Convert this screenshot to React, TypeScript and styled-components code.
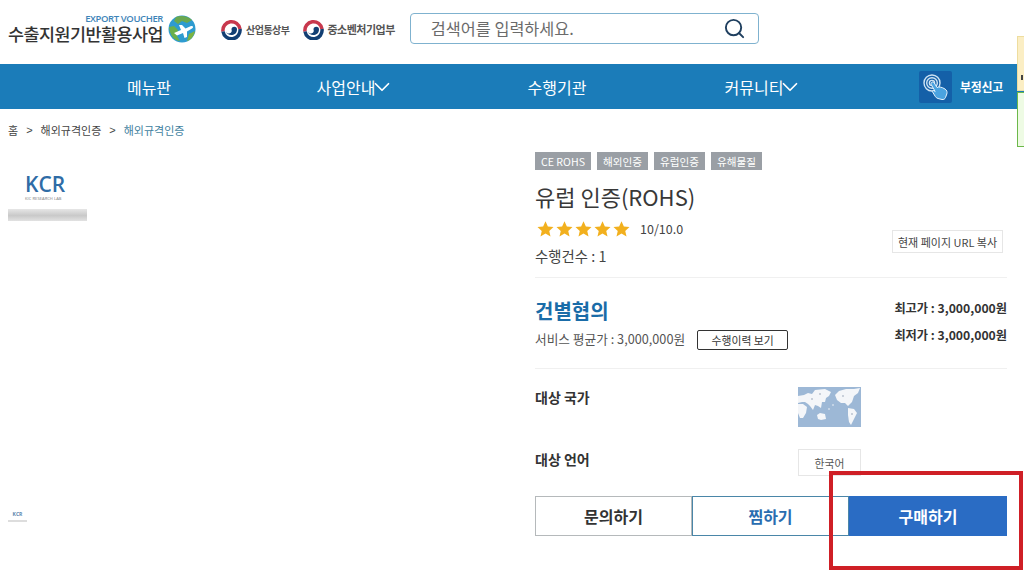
import React from "react";
import styled, { createGlobalStyle } from "styled-components";
import { ChevronDown, Search } from "lucide-react";

const GlobalStyle = createGlobalStyle`
  html, body {
    margin: 0;
    padding: 0;
    background: #fff;
  }
  body {
    font-family: "Noto Sans CJK KR", "Noto Sans", sans-serif;
    color: #333;
    overflow: hidden;
  }
  * {
    box-sizing: border-box;
  }
`;

const Taegeuk = () => (
  <svg width="21" height="21" viewBox="0 0 42 42">
    <path d="M4 25 A17 17 0 0 1 38 20" fill="none" stroke="#c8384d" strokeWidth="7" />
    <path d="M38 20 A17 17 0 0 1 4 25" fill="none" stroke="#123f73" strokeWidth="7" />
    <path d="M10 25 A11 11 0 0 1 32 21 A5.5 5.5 0 0 1 21 21 A5.5 5.5 0 0 0 10 25 Z" fill="#fff" />
    <path d="M10 25 C12 35 32 35 32 21 A5.5 5.5 0 0 0 21 21 A5.5 5.5 0 0 1 10 25 Z" fill="#123f73" />
  </svg>
);

const Globe = () => (
  <GlobeWrap width="28" height="28" viewBox="0 0 28 28">
    <circle cx="14" cy="14" r="13.5" fill="#2e9bd0" />
    <path d="M8 2 C13 0 20 1 24 5 L19 8 L14 6 L10 9 L6 6 Z" fill="#6aa84f" />
    <path d="M1 12 L6 11 L10 15 L9 21 L12 26 C7 26 2 21 1 12 Z" fill="#6ab04c" />
    <path d="M21 19 L27 16 C26 21 23 25 19 26 Z" fill="#7cb342" />
    <path d="M6 18 L13 15 L11 10 L14 10 L17.5 13.5 L23 11 C25 10.5 26 12 24 13.5 L19 16.5 L19 22 L16.5 23 L15 18 L9 20.5 Z" fill="#fff" />
  </GlobeWrap>
);

const TouchIcon = () => (
  <svg width="28" height="28" viewBox="0 0 28 28" fill="none">
    <circle cx="10" cy="10" r="8" stroke="#cfe3f3" strokeWidth="1.4" />
    <circle cx="10" cy="10" r="5.3" stroke="#cfe3f3" strokeWidth="1.4" />
    <circle cx="10" cy="10" r="2.6" stroke="#cfe3f3" strokeWidth="1.4" />
    <path
      d="M9.5 9.5 C10.5 8.5 11.8 9 12.3 10 L15 14.5 C16.5 13.5 20 14 23 16 C24.8 17.2 25.5 19 24.8 21 L23.5 24.5 C23 26 21.5 26.8 20 26.5 L16 25.5 C14.8 25.2 13.8 24.4 13.2 23.3 L10.5 18.8 C10 18 11.2 17 12.2 17.8 L13.2 18.6 L9.2 11.5 C8.9 10.8 9 10 9.5 9.5 Z"
      fill="#4aa3e0"
      stroke="#e6f2fb"
      strokeWidth="1"
    />
  </svg>
);

const WorldMap = () => (
  <svg width="63" height="40" viewBox="0 0 63 40">
    <rect width="63" height="40" fill="#9db8d6" />
    <path d="M0 9 L6 8 L10 6 L14 7 L17 3 L27 2 L33 5 L31 9 L28 11 L27 15 L24 15 L23 21 L20 19 L17 18 L15 23 L12 19 L10 17 L7 15 L4 15 L0 16 Z" fill="#f4f6f9" />
    <path d="M0 17 L5 17 L9 20 L8 26 L5 31 L2 31 L0 26 Z" fill="#f4f6f9" />
    <path d="M19 28 L22 26 L27 27 L28 32 L23 33 L20 32 Z" fill="#f4f6f9" />
    <path d="M37 8 L41 4 L48 2 L56 2 L62 1 L60 6 L56 9 L54 15 L50 19 L47 16 L43 16 L39 13 Z" fill="#f4f6f9" />
    <path d="M50 21 L56 22 L59 26 L56 32 L53 38 L51 35 L50 28 Z" fill="#f4f6f9" />
    <circle cx="31" cy="22" r="0.8" fill="#f4f6f9" />
    <circle cx="35" cy="18" r="0.8" fill="#f4f6f9" />
    <circle cx="14" cy="12" r="0.7" fill="#7d8fa5" />
    <circle cx="45" cy="9" r="0.7" fill="#7d8fa5" />
    <circle cx="22" cy="7" r="0.7" fill="#7d8fa5" />
    <circle cx="54" cy="27" r="0.7" fill="#7d8fa5" />
  </svg>
);

const Stars = () => (
  <StarRow>
    {[0, 1, 2, 3, 4].map((i) => (
      <svg key={i} width="17" height="16" viewBox="0 0 24 23">
        <path d="M12 0.5 L15.4 8 L23.5 8.8 L17.4 14.2 L19.2 22.3 L12 18.1 L4.8 22.3 L6.6 14.2 L0.5 8.8 L8.6 8 Z" fill="#f2b01e" />
      </svg>
    ))}
  </StarRow>
);

const tags = ["CE ROHS", "해외인증", "유럽인증", "유해물질"];

const App = () => {
  return (
    <Page>
      <GlobalStyle />
      <TopBar>
        <Brand>
          <BrandText>
            <BrandEng>EXPORT VOUCHER</BrandEng>
            <BrandKor>수출지원기반활용사업</BrandKor>
          </BrandText>
          <Globe />
        </Brand>
        <Ministry>
          <Taegeuk />
          <MinistryName $size={10}>산업통상부</MinistryName>
        </Ministry>
        <Ministry>
          <Taegeuk />
          <MinistryName $size={11}>중소벤처기업부</MinistryName>
        </Ministry>
        <SearchBox>
          <SearchText>검색어를 입력하세요.</SearchText>
          <Search size={23} strokeWidth={2} color="#1f3f5f" />
        </SearchBox>
      </TopBar>

      <Nav>
        <NavItem>메뉴판</NavItem>
        <NavItem>
          사업안내
          <NavChevron size={26} strokeWidth={1.6} />
        </NavItem>
        <NavItem>수행기관</NavItem>
        <NavItem>
          커뮤니티
          <NavChevron size={26} strokeWidth={1.6} />
        </NavItem>
        <Report>
          <ReportIcon>
            <TouchIcon />
          </ReportIcon>
          <ReportText>부정신고</ReportText>
        </Report>
      </Nav>

      <Crumbs>
        <span>홈</span>
        <CrumbSep>&gt;</CrumbSep>
        <span>해외규격인증</span>
        <CrumbSep>&gt;</CrumbSep>
        <CrumbNow>해외규격인증</CrumbNow>
      </Crumbs>

      <Main>
        <Gallery>
          <div>
            <KcrLogo>
              KCR
              <KcrSub>KIC RESEARCH LAB</KcrSub>
            </KcrLogo>
            <GrayBar />
          </div>
          <Thumb>
            <ThumbLogo>KCR</ThumbLogo>
            <ThumbBar />
          </Thumb>
        </Gallery>

        <Detail>
          <TagRow>
            {tags.map((t) => (
              <Tag key={t}>{t}</Tag>
            ))}
          </TagRow>
          <Title>유럽 인증(ROHS)</Title>

          <RatingBlock>
            <div>
              <RatingRow>
                <Stars />
                <Score>10/10.0</Score>
              </RatingRow>
              <Count>수행건수 : 1</Count>
            </div>
            <CopyButton>현재 페이지 URL 복사</CopyButton>
          </RatingBlock>

          <PriceBlock>
            <div>
              <PriceTitle>건별협의</PriceTitle>
              <AvgRow>
                <AvgText>서비스 평균가 : 3,000,000원</AvgText>
                <HistoryButton>수행이력 보기</HistoryButton>
              </AvgRow>
            </div>
            <PriceRange>
              <span>최고가 : 3,000,000원</span>
              <span>최저가 : 3,000,000원</span>
            </PriceRange>
          </PriceBlock>

          <InfoRow $height={80} $pad={18}>
            <InfoLabel>대상 국가</InfoLabel>
            <WorldMap />
          </InfoRow>
          <InfoRow $height={47} $pad={0}>
            <InfoLabel>대상 언어</InfoLabel>
            <LangBox>한국어</LangBox>
          </InfoRow>

          <Actions>
            <ActionButton $kind="plain">문의하기</ActionButton>
            <ActionButton $kind="outline">찜하기</ActionButton>
            <ActionButton $kind="solid">구매하기</ActionButton>
          </Actions>
        </Detail>
      </Main>

      <SideTab $bg="#fbeec4" $line="#eedd9f" $top={36} $h={55}>
        <TabMark />
      </SideTab>
      <SideTab $bg="#eefbe4" $line="#6cb84a" $top={92} $h={55} />
      <Highlight />
    </Page>
  );
};

export default App;

const Page = styled.div`
  position: relative;
  width: 1024px;
  height: 572px;
  overflow: hidden;
  background: #fff;
`;

const TopBar = styled.header`
  display: flex;
  align-items: center;
  height: 64px;
  padding: 0 0 8px 8px;
`;

const Brand = styled.div`
  display: flex;
  align-items: center;
  gap: 5px;
  margin-right: 25px;
`;

const GlobeWrap = styled.svg`
  margin-top: 2px;
`;

const BrandText = styled.div`
  display: flex;
  flex-direction: column;
  align-items: flex-end;
`;

const BrandEng = styled.div`
  font-family: "Open Sans", sans-serif;
  font-size: 9.5px;
  line-height: 11px;
  font-weight: 600;
  letter-spacing: -0.4px;
  color: #3d84b8;
`;

const BrandKor = styled.div`
  font-size: 17.4px;
  line-height: 20px;
  font-weight: 500;
  letter-spacing: -0.5px;
  color: #333;
`;

const Ministry = styled.div`
  display: flex;
  align-items: center;
  gap: 4px;
  margin-top: 2px;
  margin-right: 13px;
`;

const MinistryName = styled.span<{ $size: number }>`
  font-size: ${(p) => p.$size}px;
  font-weight: 700;
  letter-spacing: -0.5px;
  color: #555;
`;

const SearchBox = styled.div`
  display: flex;
  align-items: center;
  justify-content: space-between;
  width: 349px;
  height: 31px;
  margin-left: 2px;
  padding: 0 12px 0 20px;
  border: 1px solid #7fb2cf;
  border-radius: 4px;
`;

const SearchText = styled.span`
  font-size: 16.3px;
  color: #6b6b6b;
`;

const Nav = styled.nav`
  display: flex;
  align-items: center;
  height: 45px;
  padding-left: 47px;
  background: #1b7cb9;
  color: #fff;
`;

const NavItem = styled.div`
  display: flex;
  align-items: center;
  justify-content: center;
  width: 204px;
  font-size: 16px;
  font-weight: 400;
`;

const NavChevron = styled(ChevronDown)`
  margin: 0 -6px;
`;

const Report = styled.div`
  display: flex;
  align-items: center;
  gap: 8px;
  margin-left: 56px;
`;

const ReportIcon = styled.div`
  display: flex;
  align-items: center;
  justify-content: center;
  width: 33px;
  height: 32px;
  border-radius: 2px;
  background: #1460a8;
`;

const ReportText = styled.span`
  font-size: 12px;
  font-weight: 700;
  letter-spacing: -0.3px;
`;

const Crumbs = styled.div`
  display: flex;
  align-items: center;
  gap: 8px;
  height: 42px;
  padding-left: 8px;
  font-size: 11px;
  color: #444;
`;

const CrumbSep = styled.span`
  font-family: "Liberation Sans", sans-serif;
`;

const CrumbNow = styled.span`
  color: #3f7fa0;
`;

const Main = styled.main`
  display: flex;
  align-items: flex-start;
  padding: 1px 17px 0 8px;
`;

const Gallery = styled.div`
  display: flex;
  flex-direction: column;
  justify-content: space-between;
  width: 527px;
  height: 372px;
  padding-top: 22px;
`;

const KcrLogo = styled.div`
  display: flex;
  flex-direction: column;
  align-items: flex-start;
  padding-left: 17px;
  font-family: "Open Sans", sans-serif;
  font-size: 21px;
  line-height: 20px;
  font-weight: 600;
  letter-spacing: 0;
  color: #2f6ca6;
`;

const KcrSub = styled.span`
  margin-top: 2px;
  font-size: 4px;
  line-height: 5px;
  font-weight: 400;
  letter-spacing: 0.1px;
  color: #777;
`;

const GrayBar = styled.div`
  width: 79px;
  height: 12px;
  margin-top: 8px;
  background: linear-gradient(#e6e6e6, #c9c9c9 55%, #e2e2e2);
`;

const Thumb = styled.div`
  display: flex;
  flex-direction: column;
  align-items: center;
  width: 19px;
  margin-bottom: 2px;
`;

const ThumbLogo = styled.span`
  font-family: "Open Sans", sans-serif;
  font-size: 5px;
  line-height: 7px;
  font-weight: 700;
  color: #5c86ad;
`;

const ThumbBar = styled.div`
  width: 19px;
  height: 2px;
  margin-top: 2px;
  background: #ddd;
`;

const Detail = styled.section`
  width: 472px;
`;

const TagRow = styled.div`
  display: flex;
  gap: 6px;
`;

const Tag = styled.span`
  display: flex;
  align-items: center;
  height: 18px;
  padding: 0 6px;
  background: #9a9fa5;
  color: #fff;
  font-size: 10.6px;
`;

const Title = styled.h1`
  margin: 10px 0 0;
  font-size: 22px;
  line-height: 32px;
  font-weight: 400;
  color: #383838;
`;

const RatingBlock = styled.div`
  display: flex;
  justify-content: space-between;
  align-items: flex-end;
  height: 66px;
  padding: 0 4px 11px 2px;
  border-bottom: 1px solid #f0f0f0;
`;

const RatingRow = styled.div`
  display: flex;
  align-items: center;
  gap: 10px;
`;

const StarRow = styled.div`
  display: flex;
  gap: 2px;
`;

const Score = styled.span`
  font-size: 12.5px;
  color: #444;
`;

const Count = styled.div`
  margin: 8px 0 0 -2px;
  font-size: 14.4px;
  line-height: 20px;
  color: #444;
`;

const CopyButton = styled.button`
  width: 111px;
  height: 23px;
  margin-bottom: 13px;
  padding: 0;
  background: #fff;
  border: 1px solid #e6e6e6;
  font-family: inherit;
  font-size: 11px;
  color: #444;
`;

const PriceBlock = styled.div`
  display: flex;
  justify-content: space-between;
  height: 91px;
  padding-top: 19px;
  border-bottom: 1px solid #f0f0f0;
`;

const PriceTitle = styled.div`
  font-size: 20px;
  line-height: 28px;
  font-weight: 700;
  color: #1a6ca8;
`;

const AvgRow = styled.div`
  display: flex;
  align-items: center;
  gap: 12px;
  margin-top: 4px;
`;

const AvgText = styled.span`
  margin-bottom: 2px;
  font-size: 12.7px;
  color: #555;
`;

const HistoryButton = styled.button`
  width: 91px;
  height: 20px;
  padding: 0;
  background: #fff;
  border: 1px solid #333;
  border-radius: 2px;
  font-family: inherit;
  font-size: 10.8px;
  color: #333;
`;

const PriceRange = styled.div`
  display: flex;
  flex-direction: column;
  align-items: flex-end;
  gap: 9px;
  margin-top: 2px;
  font-size: 12.2px;
  line-height: 18px;
  font-weight: 700;
  color: #333;
`;

const InfoRow = styled.div<{ $height: number; $pad: number }>`
  display: grid;
  grid-template-columns: 263px 63px;
  align-items: start;
  height: ${(p) => p.$height}px;
  padding-top: ${(p) => p.$pad}px;
`;

const InfoLabel = styled.div`
  font-size: 14px;
  line-height: 20px;
  font-weight: 700;
  color: #333;
`;

const LangBox = styled.div`
  display: flex;
  align-items: center;
  justify-content: center;
  height: 27px;
  border: 1px solid #e6e6e6;
  font-size: 10.8px;
  color: #555;
`;

const Actions = styled.div`
  display: grid;
  grid-template-columns: 157px 157px 158px;
  height: 40px;
`;

const ActionButton = styled.button<{ $kind: "plain" | "outline" | "solid" }>`
  padding: 0;
  font-family: inherit;
  font-size: 16px;
  font-weight: 700;
  background: ${(p) => (p.$kind === "solid" ? "#2a6cc4" : "#fff")};
  color: ${(p) =>
    p.$kind === "solid" ? "#fff" : p.$kind === "outline" ? "#2a6db0" : "#333"};
  border: 1px solid
    ${(p) =>
      p.$kind === "solid" ? "#2a6cc4" : p.$kind === "outline" ? "#4a86a8" : "#b5b9bb"};
`;

const SideTab = styled.div<{ $bg: string; $line: string; $top: number; $h: number }>`
  position: absolute;
  top: ${(p) => p.$top}px;
  right: 0;
  width: 7px;
  height: ${(p) => p.$h}px;
  background: ${(p) => p.$bg};
  border: 1px solid ${(p) => p.$line};
  border-right: none;
`;

const TabMark = styled.div`
  position: absolute;
  left: 3px;
  top: 38px;
  width: 2px;
  height: 5px;
  background: #444;
`;

const Highlight = styled.div`
  position: absolute;
  left: 829px;
  top: 471px;
  width: 194px;
  height: 99px;
  border: 4px solid #cf1f26;
`;
